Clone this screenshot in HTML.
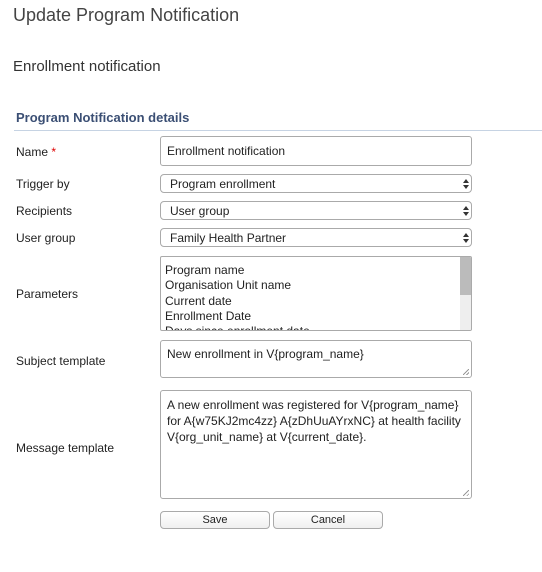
<!DOCTYPE html>
<html><head><style>
body{margin:0;width:542px;height:572px;background:#fff;font-family:"Liberation Sans",Arial,sans-serif;color:#222;position:relative;overflow:hidden}
.a{position:absolute}
.lbl{position:absolute;left:16px;font-size:12px;color:#222}
.box{position:absolute;left:160px;width:312px;border:1px solid #aaa;border-radius:3px;background:#fff;box-sizing:border-box;font-size:12px}
.sel{height:19px;border-radius:4px;line-height:18px;padding-left:9px}
.arr{position:absolute;right:5px;top:4px;width:0;height:0}
.arr:before{content:"";position:absolute;left:-3px;top:0;border-left:3px solid transparent;border-right:3px solid transparent;border-bottom:4px solid #333}
.arr:after{content:"";position:absolute;left:-3px;top:6px;border-left:3px solid transparent;border-right:3px solid transparent;border-top:4px solid #333}
.btn{position:absolute;top:511px;height:18px;border:1px solid #aaa;border-radius:4px;background:linear-gradient(#fff,#f0f0f0);font-size:11px;text-align:center;line-height:17px;box-sizing:border-box}
.grip{position:absolute;right:2px;bottom:2px;width:6px;height:6px;background:linear-gradient(135deg,transparent 45%,#999 45%,#999 55%,transparent 55%,transparent 75%,#999 75%,#999 85%,transparent 85%)}
</style></head><body>
<div class="a" style="left:13px;top:5px;font-size:18px;color:#444">Update Program Notification</div>
<div class="a" style="left:13px;top:58px;font-size:15px;color:#333">Enrollment notification</div>
<div class="a" style="left:16px;top:110px;font-size:13px;font-weight:bold;color:#3b4f74">Program Notification details</div>
<div class="a" style="left:14px;top:130px;width:528px;height:1px;background:#c6d3e3"></div>

<div class="lbl" style="top:145px">Name <span style="color:#d00">*</span></div>
<div class="box" style="top:136px;height:30px;line-height:28px;padding-left:6px;font-size:12px">Enrollment notification</div>

<div class="lbl" style="top:177px">Trigger by</div>
<div class="box sel" style="top:174px">Program enrollment<span class="arr"></span></div>
<div class="lbl" style="top:204px">Recipients</div>
<div class="box sel" style="top:201px">User group<span class="arr"></span></div>
<div class="lbl" style="top:231px">User group</div>
<div class="box sel" style="top:228px">Family Health Partner<span class="arr"></span></div>

<div class="lbl" style="top:287px">Parameters</div>
<div class="box" style="top:256px;height:75px;overflow:hidden;padding:6px 0 0 4px;line-height:15.3px;border-radius:2px">Program name<br>Organisation Unit name<br>Current date<br>Enrollment Date<br>Days since enrollment date
<div class="a" style="right:0;top:0;width:11px;height:74px;background:#eee"></div>
<div class="a" style="right:0;top:0;width:11px;height:38px;background:#bbb"></div></div>

<div class="lbl" style="top:354px">Subject template</div>
<div class="box" style="top:340px;height:38px;padding:6px 0 0 6px">New enrollment in V{program_name}<div class="grip"></div></div>

<div class="lbl" style="top:441px">Message template</div>
<div class="box" style="top:390px;height:109px;padding:6px 0 0 6px;line-height:16px">A new enrollment was registered for V{program_name} for A{w75KJ2mc4zz} A{zDhUuAYrxNC} at health facility V{org_unit_name} at V{current_date}.<div class="grip"></div></div>

<div class="btn" style="left:160px;width:110px">Save</div>
<div class="btn" style="left:273px;width:110px">Cancel</div>
</body></html>
